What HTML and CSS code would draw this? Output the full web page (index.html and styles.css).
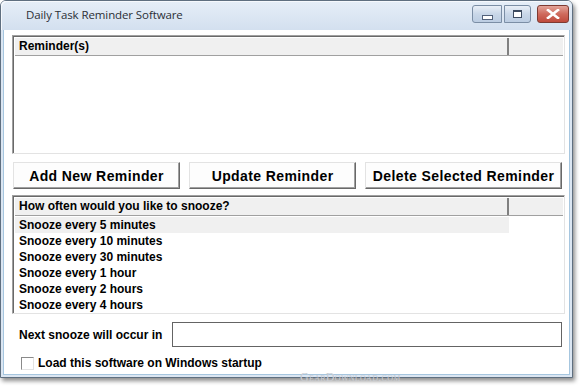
FILE: index.html
```html
<!DOCTYPE html>
<html>
<head>
	<title>Daily Task Reminder Software</title>
	<link rel="stylesheet" href="styles.css">
</head>
<body>
	<div class="window">
		<div class="titlebar">
			<span class="title">Daily Task Reminder Software</span>
			<div class="caption-buttons">
				<div class="cap cap-min"><span class="min-bar"></span></div>
				<div class="cap cap-max"><span class="max-box"></span></div>
				<div class="cap cap-close">
					<svg width="14" height="10" viewBox="0 0 14 10">
						<path d="M2 1 L12 9 M12 1 L2 9" stroke="#fff" stroke-width="2.6" stroke-linecap="square"/>
					</svg>
				</div>
			</div>
		</div>

		<div class="client">
			<!-- daftar pengingat -->
			<div class="listbox reminders">
				<div class="list-header">
					<div class="col col-main">Reminder(s)</div>
					<div class="col col-rest"></div>
				</div>
			</div>

			<div class="buttons">
				<button type="button" class="btn btn-add">Add New Reminder</button>
				<button type="button" class="btn btn-update">Update Reminder</button>
				<button type="button" class="btn btn-delete">Delete Selected Reminder</button>
			</div>

			<!-- pilihan snooze -->
			<div class="listbox snooze">
				<div class="list-header">
					<div class="col col-main">How often would you like to snooze?</div>
					<div class="col col-rest"></div>
				</div>
				<ul class="items">
					<li class="selected">Snooze every 5 minutes</li>
					<li>Snooze every 10 minutes</li>
					<li>Snooze every 30 minutes</li>
					<li>Snooze every 1 hour</li>
					<li>Snooze every 2 hours</li>
					<li>Snooze every 4 hours</li>
				</ul>
			</div>

			<div class="next-row">
				<label for="next">Next snooze will occur in</label>
				<input type="text" id="next">
			</div>

			<div class="check-row">
				<span class="checkbox"></span>
				<span>Load this software on Windows startup</span>
			</div>
		</div>
	</div>
	<div class="watermark">GearDownload.com</div>
</body>
</html>
```

FILE: styles.css
```css
body {
	margin: 0;
	padding: 0;
	background: #fff;
	font-family: "Liberation Sans", Arial, sans-serif;
	width: 582px;
	height: 386px;
	overflow: hidden;
	position: relative;
}

.window {
	width: 571px;
	height: 376px;
	border: 1px solid #5f6f80;
	border-radius: 6px 6px 0 0;
	background: #dbe6f2;
	box-shadow: 2px 3px 4px rgba(0, 0, 0, 0.45);
	display: flex;
	flex-direction: column;
}

.titlebar {
	height: 29px;
	flex: none;
	display: flex;
	align-items: flex-start;
	justify-content: space-between;
	background: linear-gradient(#e6eef8, #d3e0ef);
	border-radius: 5px 5px 0 0;
	box-shadow: inset 1px 1px 0 #f6f9fd;
}

.title {
	font-family: "Open Sans", "DejaVu Sans", sans-serif;
	font-size: 11.5px;
	color: #2b2f36;
	margin: 6px 0 0 25px;
	letter-spacing: -0.1px;
}

.caption-buttons {
	display: flex;
	gap: 2px;
	margin: 4px 3px 0 0;
}

.cap {
	height: 16px;
	border: 1px solid #7b8ea5;
	display: flex;
	align-items: center;
	justify-content: center;
}

.cap-min {
	width: 28px;
	border-radius: 3px 0 0 3px;
	background: linear-gradient(#e9eff7, #c9d7e8 50%, #bccde2);
}

.cap-max {
	width: 25px;
	background: linear-gradient(#e9eff7, #c9d7e8 50%, #bccde2);
	margin-right: 4px;
	border-radius: 0 3px 3px 0;
}

.cap-close {
	width: 30px;
	border-color: #7e3a32;
	border-radius: 3px;
	background: linear-gradient(#e3a49a, #cf6a5c 50%, #bf4a3c);
}

.min-bar {
	width: 9px;
	height: 3px;
	margin-top: 6px;
	background: #fff;
	border: 1px solid #52617a;
}

.max-box {
	width: 7px;
	height: 5px;
	border: 1px solid #3d4b60;
	border-top-width: 2px;
	background: #fff;
}

.client {
	flex: 1;
	background: #fff;
	margin: 0 2px 2px 2px;
	border: 1px solid #a6c6df;
	border-top: none;
	padding: 5px 7px 0 8px;
	display: flex;
	flex-direction: column;
}

.listbox {
	width: 549px;
	border: 1px solid;
	border-color: #a0a0a0 #e3e3e3 #e3e3e3 #a0a0a0;
	box-shadow: inset 1px 1px 0 #696969;
	padding: 2px 0 0 2px;
	background: #fff;
}

.reminders {
	height: 115px;
}

.snooze {
	height: 115px;
	margin-top: 6px;
}

.list-header {
	display: flex;
	height: 17px;
	background: #f0f0f0;
	border-bottom: 1px solid #a0a0a0;
	margin-right: 1px;
}

.col {
	font-size: 12px;
	font-weight: bold;
	color: #000;
	line-height: 17px;
	box-sizing: border-box;
}

.col-main {
	width: 494px;
	padding-left: 4px;
	border-right: 2px solid #808080;
}

.col-rest {
	flex: 1;
}

.buttons {
	display: flex;
	gap: 9px;
	margin: 8px 0 0 1px;
}

.btn {
	height: 27px;
	padding: 0;
	font-family: "Liberation Sans", Arial, sans-serif;
	font-size: 14px;
	font-weight: bold;
	letter-spacing: 0.4px;
	color: #000;
	background: #fdfdfd;
	border: 1px solid;
	border-color: #e3e3e3 #696969 #696969 #e3e3e3;
	box-shadow: inset -1px -1px 0 #a0a0a0;
}

.btn-add,
.btn-update {
	width: 168px;
}

.btn-delete {
	width: 198px;
}

.items {
	list-style: none;
	margin: 0;
	padding: 1px 0 0 0;
}

.items li {
	width: 490px;
	height: 16px;
	line-height: 16px;
	padding-left: 4px;
	font-size: 12px;
	font-weight: bold;
	color: #000;
}

.items li.selected {
	background: #f0f0f0;
}

.next-row {
	display: flex;
	align-items: center;
	margin-top: 8px;
}

.next-row label {
	font-size: 12px;
	font-weight: bold;
	width: 153px;
	padding-left: 7px;
}

.next-row input {
	width: 389px;
	height: 23px;
	padding: 0;
	border: 1px solid #646464;
	box-sizing: content-box;
}

.check-row {
	display: flex;
	align-items: center;
	gap: 4px;
	margin: 9px 0 0 9px;
	font-size: 12px;
	font-weight: bold;
}

.checkbox {
	width: 11px;
	height: 11px;
	border: 1px solid;
	border-color: #8a8a8a #e3e3e3 #e3e3e3 #8a8a8a;
	background: #fff;
}

.watermark {
	position: absolute;
	left: 300px;
	top: 370px;
	font-family: "Liberation Serif", serif;
	font-size: 12px;
	font-variant: small-caps;
	letter-spacing: 0.3px;
	color: #c9ccd2;
}
```
